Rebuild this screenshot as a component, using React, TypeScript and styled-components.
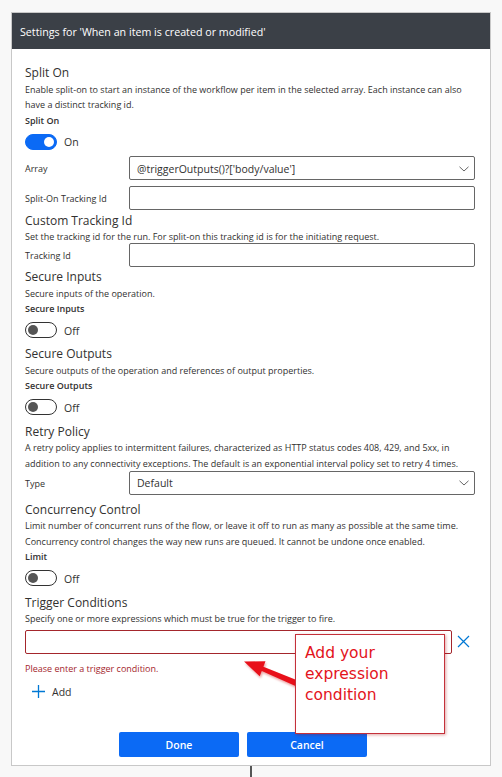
import React from 'react'
import styled, { createGlobalStyle, css } from 'styled-components'

const GlobalStyle = createGlobalStyle`
  body {
    margin: 0;
    background: #f8f8f8;
    font-family: 'Open Sans', 'Noto Sans', sans-serif;
    color: #323130;
  }
`

const baselineDrop = css`
  padding-top: 1.5px;
  margin-bottom: -1.5px;
`

const Page = styled.div`
  height: 777px;
  overflow: hidden;
  padding: 12px 0 0 11px;
  box-sizing: border-box;
  display: flex;
  flex-direction: column;
  align-items: flex-start;
`

const Panel = styled.div`
  position: relative;
  width: 480px;
  box-sizing: border-box;
  border: 1px solid #c8c8c8;
  background: #fff;
`

const Header = styled.div`
  height: 36px;
  display: flex;
  align-items: center;
  padding: 1px 0 0 8px;
  box-sizing: border-box;
  background: #3b4047;
  color: #fff;
  font-size: 10.7px;
`

const Body = styled.div`
  padding: 14.5px 15px 7.5px 13px;
`

const SectionTitle = styled.div<{ $top?: number }>`
  margin-top: ${(p) => p.$top ?? 0}px;
  font-size: 12px;
  line-height: 16px;
  color: #323130;
  ${baselineDrop}
`

const Description = styled.div`
  margin-top: 0.5px;
  font-size: 9px;
  line-height: 15.5px;
  color: #323130;
  ${baselineDrop}
`

const FieldLabel = styled.div`
  font-size: 9px;
  font-weight: 600;
  line-height: 16px;
  ${baselineDrop}
`

const ToggleRow = styled.div`
  display: flex;
  align-items: center;
  gap: 7px;
  height: 16px;
  margin: 6.5px 0 6.7px;
`

const Track = styled.span<{ $on?: boolean }>`
  width: 32px;
  height: 16px;
  box-sizing: border-box;
  border-radius: 8px;
  display: flex;
  align-items: center;
  justify-content: ${(p) => (p.$on ? 'flex-end' : 'flex-start')};
  padding: 0 2px;
  background: ${(p) => (p.$on ? '#0b6af5' : '#fff')};
  border: 1px solid ${(p) => (p.$on ? '#0b6af5' : '#333')};
`

const Knob = styled.span<{ $on?: boolean }>`
  width: 10px;
  height: 10px;
  border-radius: 50%;
  background: ${(p) => (p.$on ? '#fff' : '#555')};
`

const ToggleText = styled.span`
  font-size: 10.5px;
  padding-top: 1px;
`

const FieldGrid = styled.div<{ $top?: number }>`
  display: grid;
  grid-template-columns: 104px 1fr;
  row-gap: 6px;
  align-items: center;
  margin-top: ${(p) => p.$top ?? 0}px;
`

const RowLabel = styled.div`
  font-size: 9px;
  line-height: 16px;
  padding-top: 2px;
`

const TextBox = styled.input<{ $invalid?: boolean }>`
  display: block;
  width: 100%;
  height: 24px;
  box-sizing: border-box;
  margin: 0;
  padding: 0 7px;
  border: 1px solid ${(p) => (p.$invalid ? '#a4262c' : '#666')};
  border-radius: 2px;
  background: #fff;
  font-family: inherit;
  font-size: 10.5px;
  color: #323130;
  outline: none;
`

const SelectBox = styled.div`
  height: 24px;
  box-sizing: border-box;
  display: flex;
  align-items: center;
  justify-content: space-between;
  padding: 1px 5px 0 7px;
  border: 1px solid #666;
  border-radius: 2px;
  font-size: 10.5px;
`

const TriggerRow = styled.div`
  display: flex;
  align-items: center;
  margin-top: 4.7px;
`

const RemoveButton = styled.span`
  width: 24px;
  display: flex;
  justify-content: center;
  align-items: center;
`

const ErrorText = styled.div`
  margin-top: 5.5px;
  font-size: 9px;
  line-height: 16px;
  color: #a4262c;
  ${baselineDrop}
`

const AddRow = styled.div`
  display: flex;
  align-items: center;
  gap: 7px;
  height: 20px;
  margin-top: 6.5px;
  padding-left: 7px;
  font-size: 10.5px;
`

const ButtonRow = styled.div`
  display: flex;
  gap: 8px;
  margin-top: 30.5px;
  padding-left: 94px;
`

const Button = styled.button`
  width: 120px;
  height: 25px;
  padding: 1px 0 0;
  border: none;
  border-radius: 2px;
  background: #0b6af5;
  color: #fff;
  font-family: inherit;
  font-size: 10.5px;
  font-weight: 600;
`

const Callout = styled.div`
  position: absolute;
  left: 283px;
  top: 621px;
  width: 150px;
  height: 100px;
  box-sizing: border-box;
  padding: 8.4px 9px;
  border: 1px solid #c4303a;
  background: #fff;
  box-shadow: 1px 1px 3px rgba(170, 0, 0, 0.35);
  font-family: 'DejaVu Sans', 'Liberation Sans', sans-serif;
  font-size: 15.5px;
  line-height: 21px;
  color: #e3141c;
`

const Pointer = styled.svg`
  position: absolute;
  left: 226px;
  top: 639px;
  overflow: visible;
  filter: drop-shadow(1px 2px 1.2px rgba(200, 0, 0, 0.35));
`

const Connector = styled.div`
  width: 2px;
  height: 12px;
  margin-left: 239px;
  background: #555;
`

function Toggle({ on }: { on?: boolean }) {
  return (
    <ToggleRow>
      <Track $on={on}>
        <Knob $on={on} />
      </Track>
      <ToggleText>{on ? 'On' : 'Off'}</ToggleText>
    </ToggleRow>
  )
}

function Chevron() {
  return (
    <svg width="10" height="6" viewBox="0 0 10 6">
      <polyline points="0.5,0.8 5,5 9.5,0.8" fill="none" stroke="#666" strokeWidth="1" />
    </svg>
  )
}

export default function App() {
  return (
    <>
      <GlobalStyle />
      <Page>
        <Panel>
          <Header>Settings for 'When an item is created or modified'</Header>
          <Body>
            <SectionTitle>Split On</SectionTitle>
            <Description>
              Enable split-on to start an instance of the workflow per item in the selected array. Each instance can also
              have a distinct tracking id.
            </Description>
            <FieldLabel>Split On</FieldLabel>
            <Toggle on />
            <FieldGrid $top={1}>
              <RowLabel>Array</RowLabel>
              <SelectBox>
                <span>@triggerOutputs()?['body/value']</span>
                <Chevron />
              </SelectBox>
              <RowLabel>Split-On Tracking Id</RowLabel>
              <TextBox readOnly value="" />
            </FieldGrid>

            <SectionTitle $top={1}>Custom Tracking Id</SectionTitle>
            <Description>Set the tracking id for the run. For split-on this tracking id is for the initiating request.</Description>
            <FieldGrid>
              <RowLabel>Tracking Id</RowLabel>
              <TextBox readOnly value="" />
            </FieldGrid>

            <SectionTitle $top={0.5}>Secure Inputs</SectionTitle>
            <Description>Secure inputs of the operation.</Description>
            <FieldLabel>Secure Inputs</FieldLabel>
            <Toggle />

            <SectionTitle>Secure Outputs</SectionTitle>
            <Description>Secure outputs of the operation and references of output properties.</Description>
            <FieldLabel>Secure Outputs</FieldLabel>
            <Toggle />

            <SectionTitle>Retry Policy</SectionTitle>
            <Description>
              A retry policy applies to intermittent failures, characterized as HTTP status codes 408, 429, and 5xx, in
              addition to any connectivity exceptions. The default is an exponential interval policy set to retry 4 times.
            </Description>
            <FieldGrid $top={1}>
              <RowLabel>Type</RowLabel>
              <SelectBox>
                <span>Default</span>
                <Chevron />
              </SelectBox>
            </FieldGrid>

            <SectionTitle $top={5.8}>Concurrency Control</SectionTitle>
            <Description>
              Limit number of concurrent runs of the flow, or leave it off to run as many as possible at the same time.
              Concurrency control changes the way new runs are queued. It cannot be undone once enabled.
            </Description>
            <FieldLabel>Limit</FieldLabel>
            <Toggle />

            <SectionTitle>Trigger Conditions</SectionTitle>
            <Description>Specify one or more expressions which must be true for the trigger to fire.</Description>
            <TriggerRow>
              <TextBox $invalid readOnly value="" />
              <RemoveButton>
                <svg width="13" height="13" viewBox="0 0 13 13">
                  <path d="M1 1L12 12M12 1L1 12" stroke="#0078d4" strokeWidth="1.2" fill="none" />
                </svg>
              </RemoveButton>
            </TriggerRow>
            <ErrorText>Please enter a trigger condition.</ErrorText>
            <AddRow>
              <svg width="13" height="13" viewBox="0 0 13 13">
                <path d="M6.5 0V13M0 6.5H13" stroke="#0078d4" strokeWidth="1.3" fill="none" />
              </svg>
              <span>Add</span>
            </AddRow>

            <ButtonRow>
              <Button>Done</Button>
              <Button>Cancel</Button>
            </ButtonRow>
          </Body>

          <Pointer width="62" height="38" viewBox="0 0 62 38">
            <polygon
              points="6,9.5 27.5,9.2 25.4,14.8 59.1,28.2 56.9,33.8 23.8,18.9 21.7,24.3"
              fill="#e8101a"
            />
          </Pointer>
          <Callout>Add your expression condition</Callout>
        </Panel>
        <Connector />
      </Page>
    </>
  )
}
